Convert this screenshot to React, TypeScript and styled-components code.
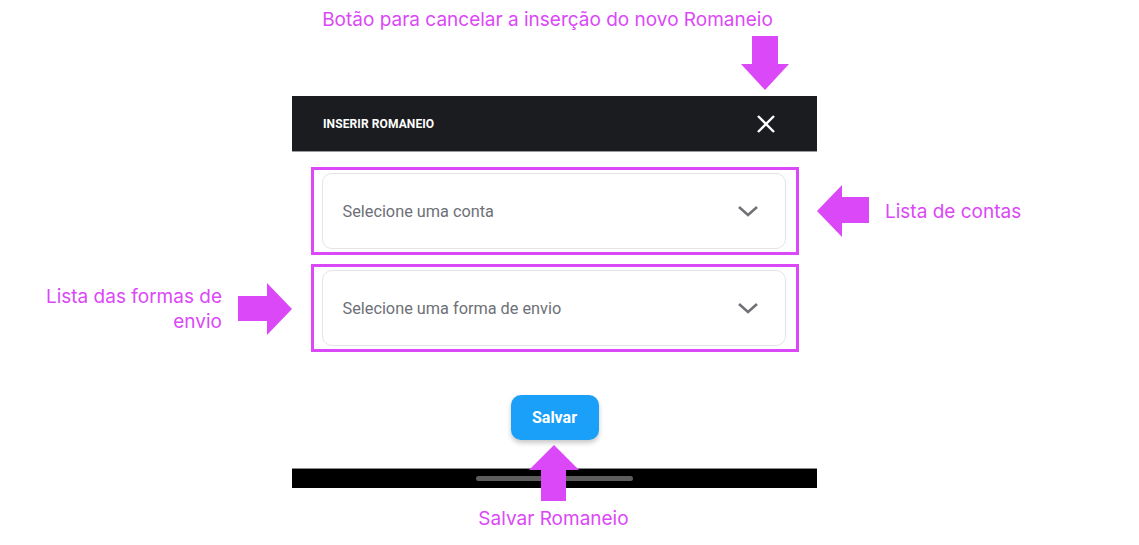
import React from 'react'
import styled, { createGlobalStyle } from 'styled-components'

const ACCENT = '#db48f8'

const GlobalStyle = createGlobalStyle`
  html, body {
    margin: 0;
    padding: 0;
    background: #ffffff;
  }
  body {
    font-family: Roboto, 'Liberation Sans', sans-serif;
  }
`

const Stage = styled.div`
  width: 1139px;
  height: 545px;
  box-sizing: border-box;
  padding-left: 292px;
  overflow: hidden;
`

const Column = styled.div`
  width: 525px;
  display: flex;
  flex-direction: column;
  align-items: center;
`

const Caption = styled.div<{ $shift?: number }>`
  height: 24px;
  margin-left: ${(p) => (p.$shift || 0) * 2}px;
  font-family: Inter, 'Open Sans', sans-serif;
  font-size: 19px;
  line-height: 24px;
  color: ${ACCENT};
  white-space: nowrap;
`

const TopCaption = styled(Caption)`
  margin-top: 8px;
`

const BottomCaption = styled(Caption)`
  margin-top: 19px;
`

const PhoneWrap = styled.div`
  position: relative;
  margin-top: 64px;
  width: 525px;
`

// annotation callouts sit over / beside the phone screenshot
const Callout = styled.div<{ $top: number; $left?: number; $right?: number }>`
  position: absolute;
  top: ${(p) => p.$top}px;
  ${(p) => (p.$left !== undefined ? `left: ${p.$left}px;` : '')}
  ${(p) => (p.$right !== undefined ? `right: ${p.$right}px;` : '')}
  display: flex;
  align-items: center;
  gap: 16px;
  font-family: Inter, 'Open Sans', sans-serif;
  font-size: 19px;
  line-height: 25px;
  color: ${ACCENT};
  white-space: nowrap;
`

const CalloutText = styled.div<{ $align?: string }>`
  text-align: ${(p) => p.$align || 'left'};
`

const ArrowSvg = styled.svg`
  display: block;
  fill: ${ACCENT};
`

const Phone = styled.div`
  display: flex;
  flex-direction: column;
  width: 525px;
`

const Header = styled.header`
  height: 55px;
  background: #1b1c1f;
  border-bottom: 1px solid #9b9b9b;
  display: flex;
  align-items: center;
  justify-content: space-between;
  padding: 0 41px 0 31px;
`

const Title = styled.h1`
  margin: 0;
  font-size: 12px;
  font-weight: 700;
  color: #ffffff;
  letter-spacing: 0.1px;
`

const CloseButton = styled.button`
  border: 0;
  background: transparent;
  padding: 0;
  display: flex;
  cursor: pointer;
`

const Body = styled.main`
  background: #ffffff;
  display: flex;
  flex-direction: column;
  align-items: center;
  padding: 15px 0 28px;
`

const Highlight = styled.div<{ $gap?: number }>`
  box-sizing: border-box;
  width: 488px;
  border: 3px solid ${ACCENT};
  padding: 3px 10px 3px 8px;
  margin-top: ${(p) => p.$gap || 0}px;
`

const Select = styled.div`
  height: 74px;
  border: 1px solid #e4e4e6;
  border-radius: 10px;
  display: flex;
  align-items: center;
  justify-content: space-between;
  padding: 0 26px 0 20px;
  background: #ffffff;
`

const Placeholder = styled.span`
  font-size: 16.3px;
  color: #6d7077;
`

const SaveButton = styled.button`
  margin-top: 43px;
  width: 88px;
  height: 45px;
  border: 0;
  border-radius: 10px;
  background: #1aa0f8;
  color: #ffffff;
  font-family: Roboto, 'Liberation Sans', sans-serif;
  font-size: 16px;
  font-weight: 700;
  box-shadow: 0 3px 5px rgba(0, 0, 0, 0.22);
`

const NavBar = styled.div`
  height: 19px;
  background: #000000;
  border-top: 1px solid #8a8a8a;
  display: flex;
  align-items: center;
  justify-content: center;
`

const HomeIndicator = styled.div`
  width: 157px;
  height: 5px;
  border-radius: 3px;
  background: #5e5e5e;
`

const Chevron = () => (
  <svg width="22" height="14" viewBox="0 0 22 14">
    <path d="M2 3 L11 11 L20 3" fill="none" stroke="#707276" strokeWidth="2.6" />
  </svg>
)

const CloseIcon = () => (
  <svg width="20" height="20" viewBox="0 0 20 20">
    <path d="M2 2 L18 18 M18 2 L2 18" stroke="#ffffff" strokeWidth="2.4" />
  </svg>
)

const DownArrow = () => (
  <ArrowSvg width="50" height="55" viewBox="0 0 50 55">
    <polygon points="12,0 38,0 38,28 49,28 25,54 1,28 12,28" />
  </ArrowSvg>
)

const UpArrow = () => (
  <ArrowSvg width="52" height="56" viewBox="0 0 52 56">
    <polygon points="26,0 51,25 38,25 38,56 13,56 13,25 1,25" />
  </ArrowSvg>
)

const LeftArrow = () => (
  <ArrowSvg width="52" height="52" viewBox="0 0 52 52">
    <polygon points="0,26 25,0 25,12 52,12 52,38 25,38 25,52" />
  </ArrowSvg>
)

const RightArrow = () => (
  <ArrowSvg width="54" height="52" viewBox="0 0 54 52">
    <polygon points="54,26 29,0 29,13 0,13 0,38 29,38 29,52" />
  </ArrowSvg>
)

const App: React.FC = () => {
  return (
    <Stage>
      <GlobalStyle />
      <Column>
        <TopCaption $shift={-7}>Botão para cancelar a inserção do novo Romaneio</TopCaption>
        <PhoneWrap>
          <Callout $top={-60} $left={448}>
            <DownArrow />
          </Callout>

          <Phone>
            <Header>
              <Title>INSERIR ROMANEIO</Title>
              <CloseButton aria-label="Fechar">
                <CloseIcon />
              </CloseButton>
            </Header>
            <Body>
              <Highlight>
                <Select>
                  <Placeholder>Selecione uma conta</Placeholder>
                  <Chevron />
                </Select>
              </Highlight>
              <Highlight $gap={9}>
                <Select>
                  <Placeholder>Selecione uma forma de envio</Placeholder>
                  <Chevron />
                </Select>
              </Highlight>
              <SaveButton>Salvar</SaveButton>
            </Body>
            <NavBar>
              <HomeIndicator />
            </NavBar>
          </Phone>

          <Callout $top={89} $left={525}>
            <LeftArrow />
            <CalloutText>Lista de contas</CalloutText>
          </Callout>

          <Callout $top={187} $right={525}>
            <CalloutText $align="right">
              Lista das formas de
              <br />
              envio
            </CalloutText>
            <RightArrow />
          </Callout>

          <Callout $top={349} $left={236}>
            <UpArrow />
          </Callout>
        </PhoneWrap>
        <BottomCaption $shift={-1}>Salvar Romaneio</BottomCaption>
      </Column>
    </Stage>
  )
}

export default App
